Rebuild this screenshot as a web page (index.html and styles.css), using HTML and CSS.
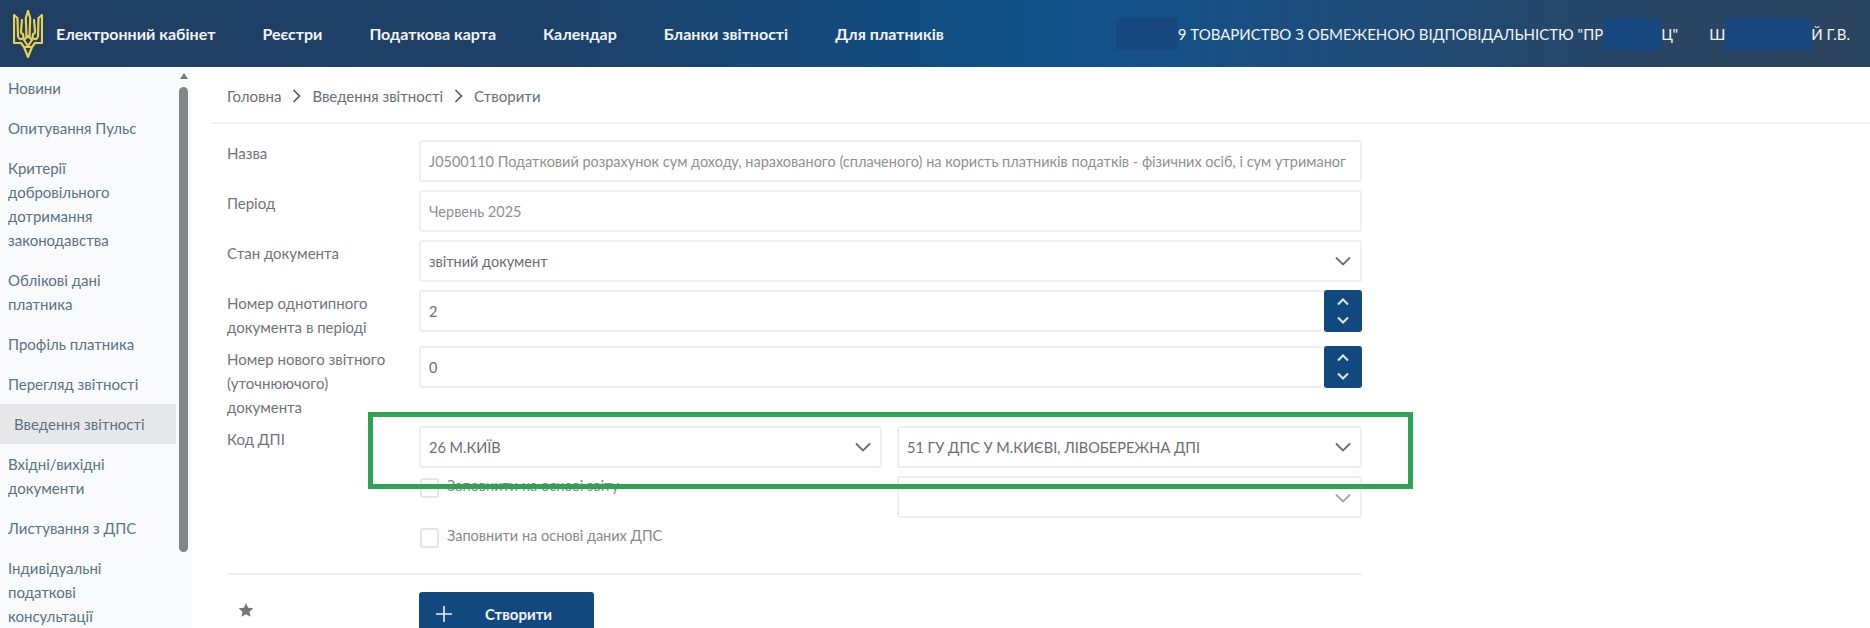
FILE: index.html
```html
<!DOCTYPE html>
<html lang="uk">
<head>
    <meta charset="UTF-8">
    <meta name="viewport" content="width=device-width, initial-scale=1.0">
    <title>Електронний кабінет</title>
    <link rel="stylesheet" href="styles.css">
</head>
<body>
    <header class="topbar">
        <svg class="trident" viewBox="0 0 30 48" fill="none" stroke="#e6d24c" stroke-width="2.2" stroke-linejoin="round" stroke-linecap="round">
            <path d="M15 1 L12.8 8 L13.5 27 M15 1 L17.2 8 L16.5 27"/>
            <path d="M1 5 L4.5 8 L5 26 C5 29 8 30 10.5 28 L10 24 C8.5 24 8 23 8 21 L9 10 M1 5 L1 33 L8 33"/>
            <path d="M29 5 L25.5 8 L25 26 C25 29 22 30 19.5 28 L20 24 C21.5 24 22 23 22 21 L21 10 M29 5 L29 33 L22 33"/>
            <path d="M8 33 L11 37 L15 47 L19 37 L22 33 M11 30 L15 26 L19 30 L15 36 Z M11 37 L19 37"/>
        </svg>
        <a class="topbar-title" href="#">Електронний кабінет</a>
        <nav class="topnav">
            <a href="#">Реєстри</a>
            <a href="#">Податкова карта</a>
            <a href="#">Календар</a>
            <a href="#">Бланки звітності</a>
            <a href="#">Для платників</a>
        </nav>
        <div class="user-info">
            <span class="redact redact-first"></span><span>9 ТОВАРИСТВО З ОБМЕЖЕНОЮ ВІДПОВІДАЛЬНІСТЮ "ПР</span><span class="redact redact-mid"></span><span>Ц"</span>
            <span class="user-name"><span>Ш</span><span class="redact redact-last"></span><span>Й Г.В.</span></span>
        </div>
    </header>

    <div class="page">
        <aside class="sidebar">
            <ul class="side-menu">
                <li><a href="#">Новини</a></li>
                <li><a href="#">Опитування Пульс</a></li>
                <li><a href="#">Критерії добровільного дотримання законодавства</a></li>
                <li><a href="#">Облікові дані платника</a></li>
                <li><a href="#">Профіль платника</a></li>
                <li><a href="#">Перегляд звітності</a></li>
                <li class="active"><a href="#">Введення звітності</a></li>
                <li><a href="#">Вхідні/вихідні документи</a></li>
                <li><a href="#">Листування з ДПС</a></li>
                <li><a href="#">Індивідуальні податкові консультації</a></li>
            </ul>
            <div class="side-scroll">
                <span class="scroll-arrow"></span>
                <span class="scroll-thumb"></span>
            </div>
        </aside>

        <main class="content">
            <div class="breadcrumb">
                <span>Головна</span>
                <svg class="crumb-sep" viewBox="0 0 10 16" fill="none" stroke="#555" stroke-width="1.6"><path d="M2 2 L8 8 L2 14"/></svg>
                <span>Введення звітності</span>
                <svg class="crumb-sep" viewBox="0 0 10 16" fill="none" stroke="#555" stroke-width="1.6"><path d="M2 2 L8 8 L2 14"/></svg>
                <span>Створити</span>
            </div>

            <form class="report-form">
                <div class="form-row">
                    <label>Назва</label>
                    <div class="field"><span class="field-text">J0500110 Податковий розрахунок сум доходу, нарахованого (сплаченого) на користь платників податків - фізичних осіб, і сум утриманог</span></div>
                </div>
                <div class="form-row">
                    <label>Період</label>
                    <div class="field"><span class="field-text">Червень 2025</span></div>
                </div>
                <div class="form-row">
                    <label>Стан документа</label>
                    <div class="field field-select">
                        <span class="field-text dark">звітний документ</span>
                        <svg class="chevron" viewBox="0 0 16 10" fill="none" stroke="#6c6c6c" stroke-width="1.8"><path d="M1 1.5 L8 8.5 L15 1.5"/></svg>
                    </div>
                </div>
                <div class="form-row">
                    <label>Номер однотипного документа в періоді</label>
                    <div class="field field-number">
                        <span class="field-text dark">2</span>
                        <div class="stepper">
                            <svg viewBox="0 0 12 8" fill="none" stroke="#dbe9f5" stroke-width="2"><path d="M1 6.5 L6 1.5 L11 6.5"/></svg>
                            <svg viewBox="0 0 12 8" fill="none" stroke="#dbe9f5" stroke-width="2"><path d="M1 1.5 L6 6.5 L11 1.5"/></svg>
                        </div>
                    </div>
                </div>
                <div class="form-row">
                    <label class="label-narrow">Номер нового звітного (уточнюючого) документа</label>
                    <div class="field field-number">
                        <span class="field-text dark">0</span>
                        <div class="stepper">
                            <svg viewBox="0 0 12 8" fill="none" stroke="#dbe9f5" stroke-width="2"><path d="M1 6.5 L6 1.5 L11 6.5"/></svg>
                            <svg viewBox="0 0 12 8" fill="none" stroke="#dbe9f5" stroke-width="2"><path d="M1 1.5 L6 6.5 L11 1.5"/></svg>
                        </div>
                    </div>
                </div>
                <div class="form-row">
                    <label>Код ДПІ</label>
                    <div class="tax-grid">
                        <div class="field field-select">
                            <span class="field-text dark">26 М.КИЇВ</span>
                            <svg class="chevron" viewBox="0 0 16 10" fill="none" stroke="#6c6c6c" stroke-width="1.8"><path d="M1 1.5 L8 8.5 L15 1.5"/></svg>
                        </div>
                        <div class="field field-select">
                            <span class="field-text dark">51 ГУ ДПС У М.КИЄВІ, ЛІВОБЕРЕЖНА ДПІ</span>
                            <svg class="chevron" viewBox="0 0 16 10" fill="none" stroke="#6c6c6c" stroke-width="1.8"><path d="M1 1.5 L8 8.5 L15 1.5"/></svg>
                        </div>
                        <div class="checks">
                            <div class="check"><span class="check-box"></span>Заповнити на основі звіту</div>
                            <div class="check"><span class="check-box"></span>Заповнити на основі даних ДПС</div>
                        </div>
                        <div class="field field-select field-empty">
                            <svg class="chevron" viewBox="0 0 16 10" fill="none" stroke="#a5a5a5" stroke-width="1.8"><path d="M1 1.5 L8 8.5 L15 1.5"/></svg>
                        </div>
                    </div>
                </div>
                <div class="form-footer">
                    <div class="star-cell">
                        <svg class="star" viewBox="0 0 24 24" fill="#777"><path d="M12 1.5 L15.2 8.6 L23 9.4 L17.2 14.6 L18.8 22.3 L12 18.4 L5.2 22.3 L6.8 14.6 L1 9.4 L8.8 8.6 Z"/></svg>
                    </div>
                    <button class="btn-create" type="button">
                        <svg viewBox="0 0 16 16" fill="none" stroke="#e8f0f7" stroke-width="1.6"><path d="M8 0 V16 M0 8 H16"/></svg>
                        Створити
                    </button>
                </div>
            </form>
        </main>
    </div>

    <!-- рамка-виділення поверх форми -->
    <div class="highlight-box"></div>
</body>
</html>
```

FILE: styles.css
```css
* {
    box-sizing: border-box;
}

html, body {
    height: 100%;
}

body {
    margin: 0;
    font-family: Lato, "Open Sans", sans-serif;
    font-size: 15px;
    color: #6f7479;
    background: #fff;
    overflow: hidden;
}

a {
    color: inherit;
    text-decoration: none;
}

/* Шапка */
.topbar {
    height: 67px;
    display: flex;
    align-items: center;
    padding-left: 13px;
    color: #f1f5f9;
    background: linear-gradient(90deg, #213e63 0%, #1d4169 30%, #0f5188 55%, #14518a 60%, #2a4562 90%, #2b4560 100%);
}

.trident {
    width: 30px;
    height: 48px;
    flex-shrink: 0;
}

.topbar-title {
    margin-left: 13px;
    font-size: 16px;
    font-weight: 700;
}

.topnav {
    display: flex;
    gap: 47px;
    margin-left: 47px;
    font-size: 16px;
    font-weight: 700;
}

.user-info {
    margin-left: auto;
    padding-right: 20px;
    display: flex;
    align-items: center;
    font-size: 15px;
    white-space: nowrap;
}

.user-name {
    display: flex;
    align-items: center;
    margin-left: 31px;
}

.redact {
    display: block;
    height: 32px;
    background: #17487f;
}

.redact-first {
    width: 62px;
}

.redact-mid {
    width: 58px;
}

.redact-last {
    width: 86px;
}

/* Основна частина */
.page {
    display: flex;
    height: 561px;
}

.sidebar {
    width: 192px;
    flex-shrink: 0;
    display: flex;
    background: #f8fafc;
    overflow: hidden;
}

.side-menu {
    width: 176px;
    flex-shrink: 0;
    margin: 0;
    padding: 1px 0 0;
    list-style: none;
    color: #5b7382;
}

.side-menu li {
    padding: 8px 16px 8px 8px;
    line-height: 24px;
    font-size: 15px;
}

.side-menu li.active {
    padding-left: 14px;
    background: #e6e7e8;
}

.side-scroll {
    width: 9px;
    margin-left: 3px;
    padding-top: 6px;
    display: flex;
    flex-direction: column;
    align-items: center;
}

.scroll-arrow {
    width: 0;
    height: 0;
    border-left: 4px solid transparent;
    border-right: 4px solid transparent;
    border-bottom: 6px solid #777;
}

.scroll-thumb {
    width: 9px;
    height: 465px;
    margin-top: 8px;
    border-radius: 5px;
    background: #858585;
}

.content {
    flex: 1;
    padding-left: 19px;
}

.breadcrumb {
    height: 57px;
    padding: 3px 0 0 16px;
    display: flex;
    align-items: center;
    gap: 10px;
    color: #666f76;
    font-size: 15px;
    border-bottom: 2px solid #f2f2f2;
}

.crumb-sep {
    width: 11px;
    height: 16px;
}

.report-form {
    width: 1151px;
    padding: 16px 0 0 16px;
}

.form-row {
    display: grid;
    grid-template-columns: 192px 1fr;
    margin-bottom: 8px;
}

.form-row label {
    line-height: 24px;
    padding: 1px 16px 0 0;
    margin-bottom: -1px;
    color: #6f7479;
}

.form-row label.label-narrow {
    padding-right: 30px;
}

.field {
    height: 42px;
    border: 2px solid #efefef;
    border-radius: 3px;
    padding: 0 8px;
    display: flex;
    align-items: center;
    overflow: hidden;
    background: #fff;
}

.field-text {
    white-space: nowrap;
    color: #8d9194;
    font-size: 14.5px;
}

.field-text.dark {
    color: #6a6e72;
}

.field-select {
    justify-content: space-between;
}

.field-empty {
    align-items: flex-start;
    justify-content: flex-end;
    padding-top: 15px;
}

.chevron {
    width: 16px;
    height: 10px;
    flex-shrink: 0;
    margin-right: 1px;
}

.field-number {
    justify-content: space-between;
    padding-right: 0;
    overflow: visible;
}

.stepper {
    width: 38px;
    height: 42px;
    margin-right: -2px;
    display: flex;
    flex-direction: column;
    align-items: center;
    justify-content: center;
    gap: 10px;
    border-radius: 3px;
    background: #12497f;
}

.stepper svg {
    width: 12px;
    height: 8px;
}

.tax-grid {
    display: grid;
    grid-template-columns: 463px 465px;
    column-gap: 15px;
    row-gap: 8px;
}

.checks {
    padding-top: 2px;
}

.check {
    height: 50px;
    display: flex;
    align-items: flex-start;
    gap: 8px;
    margin-left: 1px;
    color: #85898c;
    font-size: 14.5px;
    line-height: 16px;
}

.check-box {
    width: 19px;
    height: 20px;
    border: 2px solid #e6e6e6;
    border-radius: 3px;
    background: #fff;
}

.form-footer {
    display: grid;
    grid-template-columns: 192px 1fr;
    margin-top: -13px;
    padding-top: 17px;
    border-top: 2px solid #f0f0f0;
}

.star-cell {
    padding: 10px 0 0 11px;
}

.star {
    width: 16px;
    height: 16px;
    display: block;
}

.btn-create {
    width: 175px;
    height: 44px;
    padding: 0 0 0 17px;
    display: flex;
    align-items: center;
    gap: 33px;
    border: none;
    border-radius: 3px;
    color: #f1f5f9;
    font-family: inherit;
    font-size: 15px;
    font-weight: 700;
    background: #12497f;
}

.btn-create svg {
    width: 16px;
    height: 16px;
}

.highlight-box {
    position: absolute;
    left: 368px;
    top: 412px;
    width: 1045px;
    height: 77px;
    border: 5px solid #2fa354;
    pointer-events: none;
}
```
